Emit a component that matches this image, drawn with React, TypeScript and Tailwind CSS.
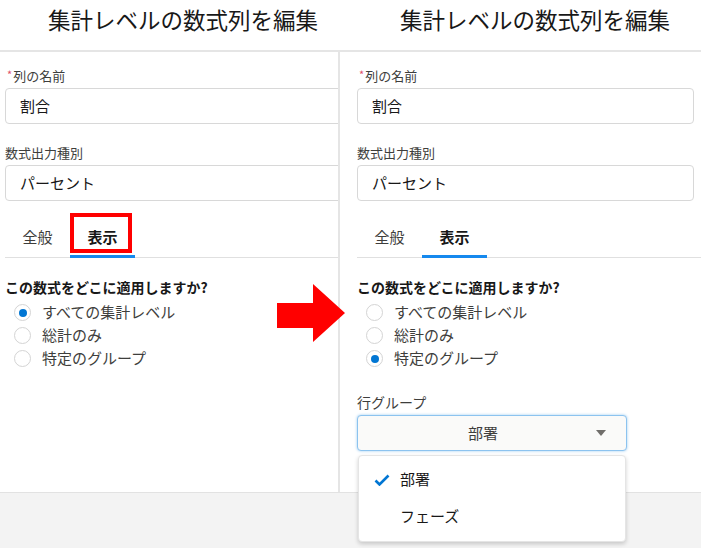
import React from "react";

const font = { fontFamily: '"Noto Sans CJK JP", "Noto Sans", sans-serif' };

function Field({ label, value, required }: { label: string; value: string; required?: boolean }) {
  return (
    <div>
      <div className="flex items-center h-[18px] text-[13px] leading-[18px] text-[#3e3e3c]">
        {required && <span className="text-[#e04f6a] text-[11px] mr-[1px] ml-[2px] -mt-[4px]">*</span>}
        {label}
      </div>
      <div className="mt-[3px] h-[36px] w-full rounded-[4px] border border-[#d8d8d8] bg-white flex items-center pl-[14px] text-[15px] text-[#181818]">
        {value}
      </div>
    </div>
  );
}

function Tabs() {
  return (
    <div className="mt-[18px] flex border-b border-[#e0e0e0]">
      <div className="w-[65px] h-[39px] flex items-center justify-center text-[15px] text-[#3e3e3c] border-b-[3px] border-transparent -mb-px pt-[1px]">
        全般
      </div>
      <div className="w-[65px] h-[39px] flex items-center justify-center text-[15px] font-bold text-[#181818] border-b-[3px] border-[#1589ee] -mb-px pt-[1px]">
        表示
      </div>
    </div>
  );
}

function Radios({ selected }: { selected: number }) {
  const items = ["すべての集計レベル", "総計のみ", "特定のグループ"];
  return (
    <div>
      <div className="mt-[19px] text-[14px] leading-[20px] font-bold text-[#181818]">この数式をどこに適用しますか?</div>
      <div className="mt-[4px]">
        {items.map((t, i) => (
          <div key={i} className="flex items-center h-[23px]">
            <span className="ml-[9px] mr-[11px] w-[17px] h-[17px] rounded-full border border-[#d4d4d4] bg-white flex items-center justify-center">
              {i === selected && <span className="w-[8px] h-[8px] rounded-full bg-[#0176d3]" />}
            </span>
            <span className="text-[15px] text-[#3e3e3c]">{t}</span>
          </div>
        ))}
      </div>
    </div>
  );
}

function Header({ pad }: { pad: string }) {
  return (
    <div className={`h-[52px] border-b-2 border-[#e5e5e5] ${pad}`}>
      <div className="pt-[4px] text-[22.5px] leading-[30px] text-[#181818] whitespace-nowrap">集計レベルの数式列を編集</div>
    </div>
  );
}

export default function App() {
  return (
    <div className="relative w-[701px] h-[548px] overflow-hidden bg-white" style={font}>
      <div className="flex h-[492px]">
        <div className="w-[340px] flex flex-col">
          <Header pad="pl-[48px]" />
          <div className="flex-1 border-r-2 border-[#e5e5e5] overflow-hidden pl-[5px] pt-[15px]">
            <div className="w-[345px]">
              <Field label="列の名前" value="割合" required />
              <div className="mt-[20px]">
                <Field label="数式出力種別" value="パーセント" />
              </div>
              <Tabs />
            </div>
            <Radios selected={0} />
          </div>
        </div>
        <div className="flex-1 flex flex-col">
          <Header pad="pl-[60px]" />
          <div className="flex-1 pl-[17px] pt-[15px]">
            <div className="pr-[7px]">
              <Field label="列の名前" value="割合" required />
              <div className="mt-[20px]">
                <Field label="数式出力種別" value="パーセント" />
              </div>
            </div>
            <Tabs />
            <Radios selected={2} />
            <div className="mt-[23px] text-[14px] leading-[18px] text-[#3e3e3c]">行グループ</div>
            <div className="relative mt-[4px] w-[270px]">
              <div className="h-[36px] rounded-[4px] border border-[#8cc3ef] bg-[#fafaf9] shadow-[0_0_3px_#9ccbf0] flex items-center pl-[12px]">
                <span className="flex-1 text-center text-[15px] text-[#3e3e3c]">部署</span>
                <svg width="10" height="6" viewBox="0 0 10 6" className="mr-[20px]">
                  <path d="M0 0 L10 0 L5 6 Z" fill="#706e6b" />
                </svg>
              </div>
              <div className="absolute z-10 left-[1px] top-[40px] w-[268px] bg-white rounded-[4px] border border-[#e5e5e5] shadow-[0_2px_4px_rgba(0,0,0,0.18)] pt-[5px] pb-[6px]">
                <div className="h-[37px] flex items-center text-[15px] text-[#181818]">
                  <svg width="16" height="12" viewBox="0 0 16 12" className="ml-[15px] mr-[10px]">
                    <path d="M1.5 6.5 L5.5 10.5 L14.5 1.5" fill="none" stroke="#0176d3" strokeWidth="2.6" />
                  </svg>
                  部署
                </div>
                <div className="h-[37px] flex items-center pl-[41px] text-[15px] text-[#181818]">フェーズ</div>
              </div>
            </div>
          </div>
        </div>
      </div>
      <div className="h-[56px] bg-[#f3f3f3] border-t border-[#e2e2e2]" />
      <div className="absolute left-[70px] top-[213px] w-[62px] h-[40px] border-[4px] border-[#ff0000]" />
      <svg className="absolute left-[277px] top-[284px]" width="69" height="59" viewBox="0 0 69 59">
        <path d="M0 19 L36 19 L36 0 L68 29 L36 58 L36 44 L0 44 Z" fill="#ff0000" />
      </svg>
    </div>
  );
}
